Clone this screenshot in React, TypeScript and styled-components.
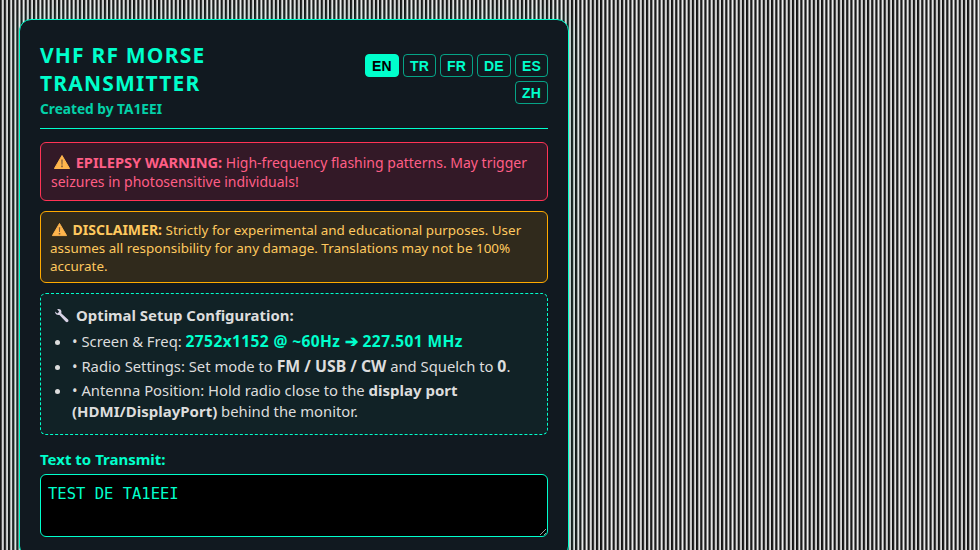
import styled, { createGlobalStyle } from "styled-components";

const GlobalStyle = createGlobalStyle`
  html, body {
    margin: 0;
    padding: 0;
    height: 100%;
    overflow: hidden;
  }
  body {
    background: repeating-linear-gradient(90deg, #111 0, #222 1.2px, #8a8a8a 1.9px, #eee 2.7px, #ddd 3.3px, #333 4.17px);
    font-family: "Noto Sans", "Open Sans", sans-serif;
  }
`;

const Page = styled.div`
  padding: 19px;
  width: 550px;
`;

const Panel = styled.div`
  background: #111920;
  border: 1px solid #00ffcc;
  border-radius: 12px;
  padding: 20px;
  box-sizing: border-box;
  width: 550px;
  box-shadow: 0 0 20px rgba(0, 255, 204, 0.15);
`;

const Header = styled.div`
  display: flex;
  justify-content: space-between;
  align-items: center;
  border-bottom: 1px solid #00ffcc;
  padding-bottom: 10px;
  margin-bottom: 13px;
`;

const Title = styled.h1`
  margin: 1px 0 0;
  font-size: 21px;
  line-height: 28px;
  font-weight: 700;
  letter-spacing: 1.2px;
  color: #00ffcc;
`;

const Credit = styled.div`
  font-size: 13.7px;
  line-height: 18px;
  font-weight: 700;
  color: #00ffcc;
  opacity: 0.8;
  margin-top: 3px;
`;

const Langs = styled.div`
  display: flex;
  flex-wrap: wrap;
  justify-content: flex-end;
  gap: 4px;
  width: 186px;
`;

const LangButton = styled.button<{ $active?: boolean }>`
  font-family: "Liberation Sans", Arial, sans-serif;
  font-size: 14px;
  font-weight: 700;
  letter-spacing: 0.2px;
  height: 23px;
  padding: 0 6px;
  border-radius: 4px;
  border: 1px solid ${(p) => (p.$active ? "#00ffcc" : "rgba(0, 255, 204, 0.6)")};
  background: ${(p) => (p.$active ? "#00ffcc" : "transparent")};
  color: ${(p) => (p.$active ? "#000" : "#00ffcc")};
`;

const EpilepsyAlert = styled.div`
  border: 1px solid #ff3355;
  background: #331927;
  color: #ff5e86;
  border-radius: 6px;
  padding: 10px 10px 9px;
  margin-bottom: 10px;
  font-size: 14px;
  line-height: 19px;

  strong {
    font-size: 14.6px;
  }
`;

const DisclaimerAlert = styled.div`
  border: 1px solid #ffaa00;
  background: #302a1c;
  color: #ffc95f;
  border-radius: 6px;
  padding: 9px 9px 7px;
  margin-bottom: 10px;
  font-size: 13.45px;
  line-height: 18px;

  strong {
    font-size: 14px;
  }
`;

const WarningIcon = styled.svg<{ $size: number; $left: number; $right: number }>`
  width: ${(p) => p.$size}px;
  height: ${(p) => p.$size}px;
  margin: 0 ${(p) => p.$right}px 0 ${(p) => p.$left}px;
  vertical-align: -2px;
`;

const Setup = styled.div`
  border: 1px dashed #00ffcc;
  background: #112226;
  color: #ddd;
  border-radius: 6px;
  padding: 11px 12px 8.5px;
  margin-bottom: 14px;
  font-size: 14.8px;
  line-height: 21px;
`;

const SetupTitle = styled.div`
  font-size: 14.9px;
  font-weight: 700;
  margin-bottom: 5px;
  display: flex;
  align-items: center;
  gap: 7px;
  padding-left: 1px;
`;

const Steps = styled.ul`
  margin: 0;
  padding-left: 19px;
`;

const Step = styled.li`
  margin-bottom: 3.5px;
`;

const Accent = styled.strong`
  color: #00ffcc;
  font-size: 15.5px;
  letter-spacing: 0.4px;
`;

const Key = styled.strong<{ $wide?: boolean }>`
  font-size: ${(p) => (p.$wide ? "15.8px" : "15px")};
`;

const Label = styled.label`
  display: block;
  font-size: 15px;
  line-height: 20px;
  font-weight: 700;
  color: #00ffcc;
  margin-bottom: 5px;
`;

const Input = styled.textarea`
  display: block;
  width: 100%;
  height: 63px;
  box-sizing: border-box;
  background: #000;
  border: 1px solid #00ffcc;
  border-radius: 6px;
  color: #00ffcc;
  padding: 10px 7px 6px;
  font-family: "DejaVu Sans Mono", monospace;
  font-size: 15.5px;
  outline: none;
`;

const languages = ["EN", "TR", "FR", "DE", "ES", "ZH"];

function Warning({ size, left, right }: { size: number; left: number; right: number }) {
  return (
    <WarningIcon $size={size} $left={left} $right={right} viewBox="0 0 16 16">
      <path d="M8 1.5 15.6 14.5H.4Z" fill="#ffb54d" stroke="#ffb54d" strokeLinejoin="round" />
      <path d="M7.3 5.5h1.4l-.2 5.2h-1ZM7.2 11.6h1.6v1.6H7.2Z" fill="#7a5a3a" />
    </WarningIcon>
  );
}

function Wrench() {
  return (
    <svg width="15" height="15" viewBox="0 0 15 15">
      <path
        d="M1 3.4 3.4 5.4 5.2 3.8 3.2 1.3C5 .4 7 1.4 7.4 3.2 7.5 3.9 7.4 4.6 7.2 5.2L14 11.4C14.7 12.1 14.6 13.1 14 13.7 13.4 14.3 12.4 14.3 11.8 13.7L5.4 6.9C3.3 7.4 1 6 1 3.4Z"
        fill="#d8d2e6"
      />
    </svg>
  );
}

export default function App() {
  return (
    <Page>
      <GlobalStyle />
      <Panel>
        <Header>
          <div>
            <Title>VHF RF MORSE<br />TRANSMITTER</Title>
            <Credit>Created by TA1EEI</Credit>
          </div>
          <Langs>
            {languages.map((lang) => (
              <LangButton key={lang} $active={lang === "EN"}>{lang}</LangButton>
            ))}
          </Langs>
        </Header>
        <EpilepsyAlert>
          <Warning size={16} left={3} right={2} /> <strong>EPILEPSY WARNING:</strong> High-frequency flashing patterns. May trigger seizures in photosensitive individuals!
        </EpilepsyAlert>
        <DisclaimerAlert>
          <Warning size={15} left={2} right={2} /> <strong>DISCLAIMER:</strong> Strictly for experimental and educational purposes. User assumes all responsibility for any damage. Translations may not be 100% accurate.
        </DisclaimerAlert>
        <Setup>
          <SetupTitle><Wrench /> Optimal Setup Configuration:</SetupTitle>
          <Steps>
            <Step>• Screen &amp; Freq: <Accent>2752x1152 @ ~60Hz ➔ 227.501 MHz</Accent></Step>
            <Step>• Radio Settings: Set mode to <Key $wide>FM / USB / CW</Key> and Squelch to <Key $wide>0</Key>.</Step>
            <Step>• Antenna Position: Hold radio close to the <Key>display port (HDMI/DisplayPort)</Key> behind the monitor.</Step>
          </Steps>
        </Setup>
        <Label>Text to Transmit:</Label>
        <Input defaultValue="TEST DE TA1EEI" />
      </Panel>
    </Page>
  );
}
